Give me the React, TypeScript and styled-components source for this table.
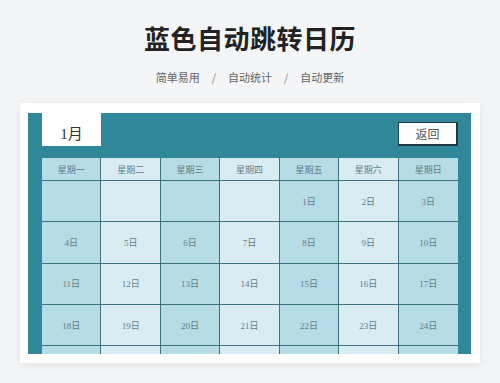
import styled, { createGlobalStyle } from 'styled-components';

const GlobalStyle = createGlobalStyle`
  html, body {
    margin: 0;
    padding: 0;
    background: #f4f5f7;
    font-family: "Noto Sans CJK SC", "Noto Sans", sans-serif;
  }
`;

const Page = styled.div`
  width: 500px;
  height: 383px;
  overflow: hidden;
  padding-top: 20px;
  box-sizing: border-box;
`;

const Title = styled.h1`
  margin: 0;
  text-align: center;
  font-size: 26px;
  line-height: 36px;
  font-weight: 700;
  color: #222;
  letter-spacing: 0.5px;
`;

const Subtitle = styled.div`
  margin-top: 13px;
  display: flex;
  justify-content: center;
  font-size: 11px;
  line-height: 16px;
  color: #666;
`;

const Slash = styled.span`
  margin: 0 12px;
  color: #888;
`;

const Card = styled.div`
  margin: 18px 20px 0;
  height: 260px;
  background: #fff;
  box-shadow: 0 2px 8px rgba(0, 0, 0, 0.08);
  padding: 10px 9px 9px 8px;
  box-sizing: border-box;
`;

const Panel = styled.div`
  height: 100%;
  background: #2f8799;
  padding: 0 13px 0 14px;
  box-sizing: border-box;
  overflow: hidden;
`;

const TopBar = styled.div`
  display: flex;
  justify-content: space-between;
  align-items: flex-start;
  height: 45px;
`;

const MonthBox = styled.div`
  width: 59px;
  height: 33px;
  background: #fff;
  font-family: "Liberation Serif", "Noto Sans CJK SC", serif;
  font-size: 15px;
  color: #333;
  display: flex;
  align-items: flex-end;
  justify-content: center;
  padding-bottom: 3px;
  box-sizing: border-box;
`;

const BackButton = styled.button`
  margin-top: 9px;
  width: 60px;
  height: 24px;
  background: #fff;
  border: 1px solid #1e3b42;
  border-right-width: 2px;
  border-bottom-width: 2px;
  font-family: "Noto Sans CJK SC", serif;
  font-size: 12px;
  color: #555;
  padding: 0;
  cursor: pointer;
`;

const Grid = styled.div`
  display: grid;
  grid-template-columns: repeat(7, 1fr);
  grid-template-rows: 23px;
  grid-auto-rows: 41.3px;
`;

const Cell = styled.div<{ $dark: boolean; $last: boolean }>`
  background: ${(p) => (p.$dark ? '#b6dce6' : '#d8ecf2')};
  border-right: ${(p) => (p.$last ? 'none' : '1px solid #3b7380')};
  border-bottom: 1px solid #3b7380;
  display: flex;
  align-items: center;
  justify-content: center;
  font-family: "Liberation Serif", "Noto Sans CJK SC", serif;
  font-size: 9px;
  color: #5f7f88;
`;

const weekdays = ['星期一', '星期二', '星期三', '星期四', '星期五', '星期六', '星期日'];

const days: (number | null)[] = [null, null, null, null];
for (let d = 1; d <= 31; d++) days.push(d);
while (days.length % 7) days.push(null);

export default function App() {
  return (
    <Page>
      <GlobalStyle />
      <Title>蓝色自动跳转日历</Title>
      <Subtitle>
        <span>简单易用</span>
        <Slash>/</Slash>
        <span>自动统计</span>
        <Slash>/</Slash>
        <span>自动更新</span>
      </Subtitle>
      <Card>
        <Panel>
          <TopBar>
            <MonthBox>1月</MonthBox>
            <BackButton>返回</BackButton>
          </TopBar>
          <Grid>
            {weekdays.map((w, i) => (
              <Cell key={w} $dark={i % 2 === 0} $last={i === 6}>
                {w}
              </Cell>
            ))}
            {days.map((d, i) => (
              <Cell key={i} $dark={i % 7 % 2 === 0} $last={i % 7 === 6}>
                {d ? `${d}日` : ''}
              </Cell>
            ))}
          </Grid>
        </Panel>
      </Card>
    </Page>
  );
}
